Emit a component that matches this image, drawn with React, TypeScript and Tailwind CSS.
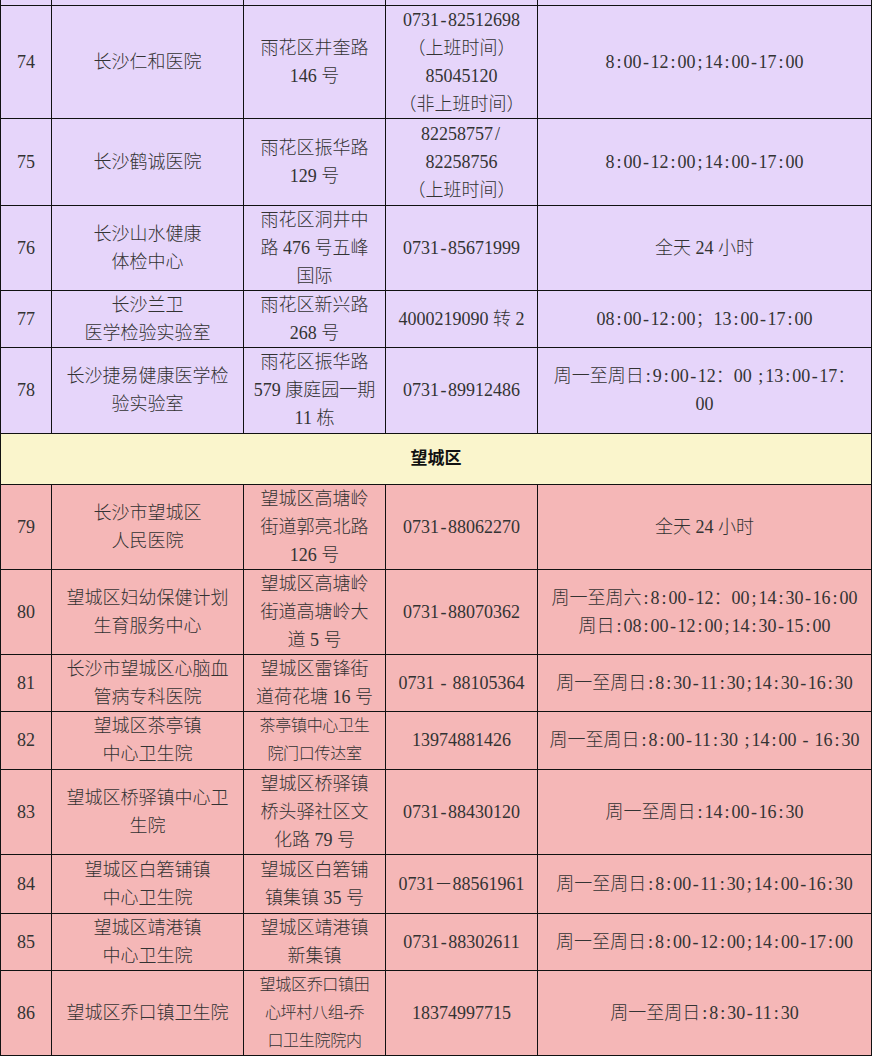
type Row = {
  n: string
  name: string[]
  addr: string[]
  tel: string[]
  hours: string[]
  h: string
  small?: boolean
}

const PURPLE = "bg-[#e6d5fa]"
const PINK = "bg-[#f5b7b7]"

const yuhua: Row[] = [
  {
    n: "74",
    name: ["长沙仁和医院"],
    addr: ["雨花区井奎路", "146 号"],
    tel: ["0731-82512698", "（上班时间）", "85045120", "（非上班时间）"],
    hours: ["8:00-12:00;14:00-17:00"],
    h: "h-[113px]",
  },
  {
    n: "75",
    name: ["长沙鹤诚医院"],
    addr: ["雨花区振华路", "129 号"],
    tel: ["82258757/", "82258756", "（上班时间）"],
    hours: ["8:00-12:00;14:00-17:00"],
    h: "h-[87px]",
  },
  {
    n: "76",
    name: ["长沙山水健康", "体检中心"],
    addr: ["雨花区洞井中", "路 476 号五峰", "国际"],
    tel: ["0731-85671999"],
    hours: ["全天 24 小时"],
    h: "h-[84px]",
  },
  {
    n: "77",
    name: ["长沙兰卫", "医学检验实验室"],
    addr: ["雨花区新兴路", "268 号"],
    tel: ["4000219090 转 2"],
    hours: ["08:00-12:00；13:00-17:00"],
    h: "h-[57px]",
  },
  {
    n: "78",
    name: ["长沙捷易健康医学检", "验实验室"],
    addr: ["雨花区振华路", "579 康庭园一期", "11 栋"],
    tel: ["0731-89912486"],
    hours: ["周一至周日:9:00-12：00 ;13:00-17：", "00"],
    h: "h-[86px]",
  },
]

const wangcheng: Row[] = [
  {
    n: "79",
    name: ["长沙市望城区", "人民医院"],
    addr: ["望城区高塘岭", "街道郭亮北路", "126 号"],
    tel: ["0731-88062270"],
    hours: ["全天 24 小时"],
    h: "h-[84px]",
  },
  {
    n: "80",
    name: ["望城区妇幼保健计划", "生育服务中心"],
    addr: ["望城区高塘岭", "街道高塘岭大", "道 5 号"],
    tel: ["0731-88070362"],
    hours: ["周一至周六:8:00-12：00;14:30-16:00", "周日:08:00-12:00;14:30-15:00"],
    h: "h-[85px]",
  },
  {
    n: "81",
    name: ["长沙市望城区心脑血", "管病专科医院"],
    addr: ["望城区雷锋街", "道荷花塘 16 号"],
    tel: ["0731 - 88105364"],
    hours: ["周一至周日:8:30-11:30;14:30-16:30"],
    h: "h-[57px]",
  },
  {
    n: "82",
    name: ["望城区茶亭镇", "中心卫生院"],
    addr: ["茶亭镇中心卫生", "院门口传达室"],
    tel: ["13974881426"],
    hours: ["周一至周日:8:00-11:30 ;14:00 - 16:30"],
    h: "h-[58px]",
    small: true,
  },
  {
    n: "83",
    name: ["望城区桥驿镇中心卫", "生院"],
    addr: ["望城区桥驿镇", "桥头驿社区文", "化路 79 号"],
    tel: ["0731-88430120"],
    hours: ["周一至周日:14:00-16:30"],
    h: "h-[83px]",
  },
  {
    n: "84",
    name: ["望城区白箬铺镇", "中心卫生院"],
    addr: ["望城区白箬铺", "镇集镇 35 号"],
    tel: ["0731－88561961"],
    hours: ["周一至周日:8:00-11:30;14:00-16:30"],
    h: "h-[59px]",
  },
  {
    n: "85",
    name: ["望城区靖港镇", "中心卫生院"],
    addr: ["望城区靖港镇", "新集镇"],
    tel: ["0731-88302611"],
    hours: ["周一至周日:8:00-12:00;14:00-17:00"],
    h: "h-[57px]",
  },
  {
    n: "86",
    name: ["望城区乔口镇卫生院"],
    addr: ["望城区乔口镇田", "心坪村八组-乔", "口卫生院院内"],
    tel: ["18374997715"],
    hours: ["周一至周日:8:30-11:30"],
    h: "h-[84px]",
    small: true,
  },
]

const cell = "border border-[#111] p-0 text-center align-middle"

// the source font sets ASCII punctuation on a half-width grid,
// so give these glyphs the same advance as a digit
function HalfWidth({ text }: { text: string }) {
  const parts = text.split(/([:;\-\/])/)
  return (
    <>
      {parts.map((p, i) =>
        p.length === 1 && ":;-/".includes(p) ? (
          <span key={i} className="inline-block w-[9px] text-center">
            {p}
          </span>
        ) : (
          <span key={i}>{p}</span>
        )
      )}
    </>
  )
}

function Lines({ lines, className = "", wide = true }: { lines: string[]; className?: string; wide?: boolean }) {
  return (
    <>
      {lines.map((l, i) => (
        <div key={i} className={"whitespace-nowrap " + className}>
          {wide ? <HalfWidth text={l} /> : l}
        </div>
      ))}
    </>
  )
}

function DataRow({ row, bg }: { row: Row; bg: string }) {
  return (
    <tr className={row.h + " " + bg}>
      <td className={cell}>{row.n}</td>
      <td className={cell}>
        <Lines lines={row.name} />
      </td>
      <td className={cell}>
        <Lines lines={row.addr} wide={!row.small} className={row.small ? "text-[16px] tracking-[-0.3px]" : ""} />
      </td>
      <td className={cell}>
        <Lines lines={row.tel} />
      </td>
      <td className={cell}>
        <Lines lines={row.hours} />
      </td>
    </tr>
  )
}

export default function App() {
  return (
    <div
      className="w-[874px] min-h-[1056px] bg-white text-[18px] leading-[28px] font-light text-[#333]"
      style={{ fontFamily: '"Liberation Serif", "Noto Sans CJK SC", serif' }}
    >
      <table className="w-[871px] table-fixed border-collapse">
        <colgroup>
          <col className="w-[51px]" />
          <col className="w-[192px]" />
          <col className="w-[142px]" />
          <col className="w-[152px]" />
          <col className="w-[334px]" />
        </colgroup>
        <tbody>
          {/* tail of row 73 */}
          <tr className={"h-[5px] " + PURPLE}>
            <td className="border border-t-0 border-[#111] p-0" />
            <td className="border border-t-0 border-[#111] p-0" />
            <td className="border border-t-0 border-[#111] p-0" />
            <td className="border border-t-0 border-[#111] p-0" />
            <td className="border border-t-0 border-[#111] p-0" />
          </tr>
          {yuhua.map((r) => (
            <DataRow key={r.n} row={r} bg={PURPLE} />
          ))}
          <tr className="h-[51px] bg-[#faf5cc]">
            <td colSpan={5} className={cell + " font-bold text-[17px] text-[#111]"}>
              望城区
            </td>
          </tr>
          {wangcheng.map((r) => (
            <DataRow key={r.n} row={r} bg={PINK} />
          ))}
        </tbody>
      </table>
    </div>
  )
}
